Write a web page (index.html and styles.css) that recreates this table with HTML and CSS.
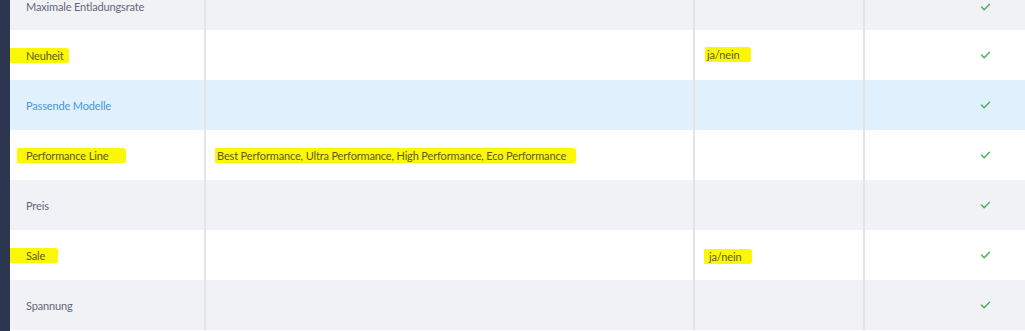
FILE: index.html
```html
<!DOCTYPE html>
<html lang="de">
<head>
<meta charset="utf-8">
<title>Filter</title>
<link rel="stylesheet" href="styles.css">
</head>
<body>
<div class="page">
  <div class="sidebar"></div>
  <div class="table">
    <div class="row gray first">
      <div class="cell c1">Maximale Entladungsrate</div>
      <div class="cell c2"></div>
      <div class="cell c3"></div>
      <div class="cell c4"><svg class="check" viewBox="0 0 12 9"><polyline points="1.5,4.5 4.5,7.5 10.5,1.5"/></svg></div>
    </div>
    <div class="row">
      <div class="cell c1"><span class="hl hl-a">Neuheit</span></div>
      <div class="cell c2"></div>
      <div class="cell c3"><span class="hl hl-c">ja/nein</span></div>
      <div class="cell c4"><svg class="check" viewBox="0 0 12 9"><polyline points="1.5,4.5 4.5,7.5 10.5,1.5"/></svg></div>
    </div>
    <div class="row blue">
      <div class="cell c1 link">Passende Modelle</div>
      <div class="cell c2"></div>
      <div class="cell c3"></div>
      <div class="cell c4"><svg class="check" viewBox="0 0 12 9"><polyline points="1.5,4.5 4.5,7.5 10.5,1.5"/></svg></div>
    </div>
    <div class="row">
      <div class="cell c1"><span class="hl hl-b">Performance Line</span></div>
      <div class="cell c2"><span class="hl hl-d">Best Performance, Ultra Performance, High Performance, Eco Performance</span></div>
      <div class="cell c3"></div>
      <div class="cell c4"><svg class="check" viewBox="0 0 12 9"><polyline points="1.5,4.5 4.5,7.5 10.5,1.5"/></svg></div>
    </div>
    <div class="row gray">
      <div class="cell c1">Preis</div>
      <div class="cell c2"></div>
      <div class="cell c3"></div>
      <div class="cell c4"><svg class="check" viewBox="0 0 12 9"><polyline points="1.5,4.5 4.5,7.5 10.5,1.5"/></svg></div>
    </div>
    <div class="row">
      <div class="cell c1"><span class="hl hl-a hl-sale">Sale</span></div>
      <div class="cell c2"></div>
      <div class="cell c3"><span class="hl hl-c hl-c2">ja/nein</span></div>
      <div class="cell c4"><svg class="check" viewBox="0 0 12 9"><polyline points="1.5,4.5 4.5,7.5 10.5,1.5"/></svg></div>
    </div>
    <div class="row gray">
      <div class="cell c1">Spannung</div>
      <div class="cell c2"></div>
      <div class="cell c3"></div>
      <div class="cell c4"><svg class="check" viewBox="0 0 12 9"><polyline points="1.5,4.5 4.5,7.5 10.5,1.5"/></svg></div>
    </div>
  </div>
</div>
</body>
</html>
```

FILE: styles.css
```css
* { box-sizing: border-box; }
html, body {
  margin: 0;
  padding: 0;
  background: #ffffff;
  overflow: hidden;
}
body {
  font-family: Lato, "Open Sans", sans-serif;
  font-size: 11px;
  letter-spacing: -0.15px;
  color: #636876;
  width: 1025px;
  height: 331px;
}
.page {
  display: flex;
  height: 331px;
}
.sidebar {
  width: 10px;
  flex: none;
  background: #2d3650;
}
.table {
  flex: 1;
  display: flex;
  flex-direction: column;
}
.row {
  display: grid;
  grid-template-columns: 194px 489px 170px 1fr;
  height: 50px;
  background: #ffffff;
}
.row.first {
  height: 30px;
}
.row.first .cell {
  padding-bottom: 20px;
}
.row.gray { background: #f1f2f6; }
.row.blue { background: #e0f0fc; }
.cell {
  display: flex;
  align-items: center;
  padding-left: 16px;
  white-space: nowrap;
}
.c2, .c3, .c4 {
  border-left: 2px solid #e2e4e9;
  padding-left: 11px;
}
.c3 { padding-left: 12px; }
.c4 {
  padding-left: 115px;
}
.link { color: #4b96d8; }
.check {
  width: 11px;
  height: 8px;
  fill: none;
  stroke: #4cae5a;
  stroke-width: 1.6;
  stroke-linecap: round;
  stroke-linejoin: round;
}
.hl {
  background: #fbf707;
  color: #5e5c1c;
  line-height: 15px;
  border-radius: 1px 3px 2px 1px;
}
.hl-a {
  margin-left: -16px;
  padding: 0 5px 0 16px;
}
.hl-sale {
  padding-right: 13px;
}
.hl-b {
  margin-left: -9px;
  padding: 0 18px 0 9px;
}
.hl-d {
  margin-left: -2px;
  padding: 0 10px 0 2px;
}
.hl-c {
  margin-left: -2px;
  padding: 0 12px 0 2px;
  margin-top: -2px;
}
.hl-c2 {
  margin-top: 2px;
  margin-left: -3px;
  padding: 0 11px 0 5px;
}
```
